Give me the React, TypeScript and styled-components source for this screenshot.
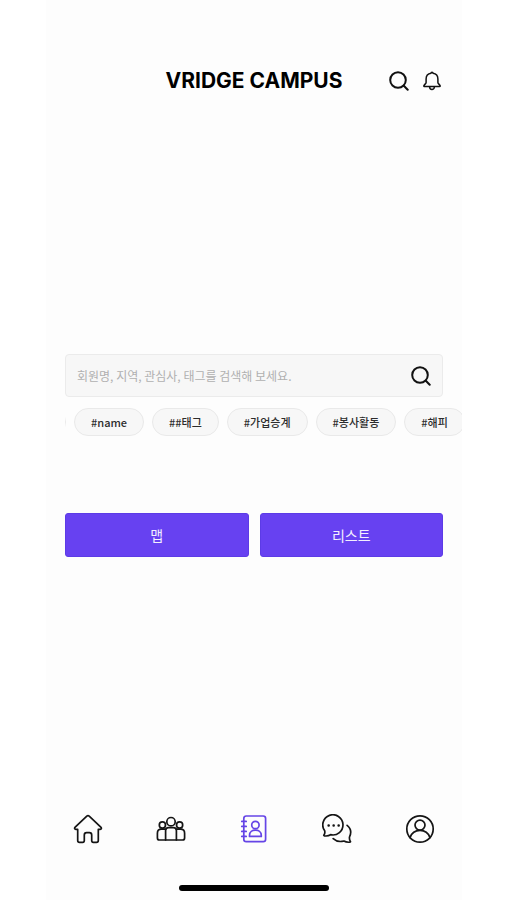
import React from "react";
import styled, { createGlobalStyle } from "styled-components";

const GlobalStyle = createGlobalStyle`
  *, *::before, *::after { box-sizing: border-box; }
  body {
    margin: 0;
    background: #ffffff;
    color: #111111;
    font-family: "Noto Sans CJK KR", "Noto Sans", sans-serif;
  }
  button, input { font-family: inherit; }
`;

const Page = styled.div`
  min-height: 100vh;
  display: flex;
  padding: 0 45px 0 46px;
`;

const Screen = styled.div`
  flex: 1;
  min-width: 0;
  display: flex;
  flex-direction: column;
  background: #fdfdfd;
`;

const Header = styled.header`
  display: grid;
  grid-template-columns: 1fr auto 1fr;
  align-items: center;
  height: 42px;
  margin-top: 60px;
  padding: 0 20px;
`;

const Brand = styled.h1`
  grid-column: 2;
  margin: 0;
  color: #000000;
  font-family: Inter, "Liberation Sans", sans-serif;
  font-size: 21px;
  font-weight: 700;
  line-height: 28px;
  white-space: nowrap;
`;

const HeaderActions = styled.div`
  display: flex;
  justify-content: flex-end;
  gap: 13px;
`;

const IconButton = styled.button`
  display: flex;
  padding: 0;
  border: 0;
  background: none;
  color: #111111;
  cursor: pointer;
`;

const Main = styled.main`
  flex: 1;
  display: flex;
  flex-direction: column;
  padding: 252px 0 40px 19px;
`;

const SearchForm = styled.form`
  display: flex;
  align-items: center;
  height: 43px;
  margin-right: 19px;
  padding: 0 11px;
  border: 1px solid #ebebeb;
  border-radius: 4px;
  background: #f7f7f7;
`;

const SearchInput = styled.input`
  flex: 1;
  min-width: 0;
  padding: 0;
  border: 0;
  outline: 0;
  background: transparent;
  color: #333333;
  font-size: 12px;
  line-height: 20px;
  &::placeholder { color: #b0b0b0; opacity: 1; }
`;

const TagList = styled.div`
  display: flex;
  gap: 8px;
  margin-top: 11px;
  overflow: hidden;
`;

const Tag = styled.button`
  flex: none;
  height: 28px;
  padding: 0 16px;
  border: 1px solid #e9e9e9;
  border-radius: 14px;
  background: #f7f7f7;
  color: #2c2c2c;
  font-size: 11px;
  font-weight: 500;
  line-height: 20px;
  white-space: nowrap;
  cursor: pointer;
`;

const ScrolledTag = styled.span`
  flex: none;
  width: 28px;
  height: 28px;
  margin-left: -27px;
  border: 1px solid #e9e9e9;
  border-radius: 14px;
`;

const ViewButtons = styled.div`
  display: grid;
  grid-template-columns: 1fr 1fr;
  gap: 11px;
  margin: 77px 19px 0 0;
`;

const ViewButton = styled.button`
  height: 44px;
  padding: 0;
  border: 1px solid #5c3be6;
  border-radius: 3px;
  background: #6741f1;
  color: #f3efff;
  font-size: 14px;
  line-height: 20px;
  cursor: pointer;
`;

const TabBar = styled.nav`
  display: grid;
  grid-template-columns: repeat(5, 1fr);
  height: 58px;
`;

const Tab = styled.a<{ $active?: boolean }>`
  display: flex;
  align-items: center;
  justify-content: center;
  color: ${(p) => (p.$active ? "#6545e6" : "#151515")};
`;

const HomeIndicator = styled.div`
  width: 36%;
  height: 6px;
  margin: 27px auto 9px;
  border-radius: 3px;
  background: #000000;
`;

const Icon = styled.svg`
  display: block;
  fill: none;
  stroke: currentColor;
  stroke-linecap: round;
  stroke-linejoin: round;
`;

const SearchIcon = ({ size }: { size: number }) => (
  <Icon width={size} height={size} viewBox="0 0 20 20" strokeWidth="2" aria-hidden="true">
    <circle cx="9" cy="9" r="7.8" />
    <path d="m14.8 14.8 3.9 3.9" />
  </Icon>
);

const BellIcon = () => (
  <Icon width="20" height="20" viewBox="0 0 20 20" strokeWidth="1.5" aria-hidden="true">
    <path d="M9 2.2C9 .9 11 .9 11 2.2c3 .5 4.9 2.7 4.9 5.7v3.5c0 1.5 2.3 2.4 2.3 3.6 0 .4-.3.6-.7.6h-15c-.4 0-.7-.2-.7-.6 0-1.2 2.3-2.1 2.3-3.6V7.9c0-3 1.9-5.2 4.9-5.7Z" />
    <path d="M7.6 15.8c0 3.5 4.8 3.5 4.8 0" />
  </Icon>
);

const HomeIcon = () => (
  <Icon width="30" height="30" viewBox="0 0 30 30" strokeWidth="1.7" aria-hidden="true">
    <path d="M13.8 2.1Q15 1 16.2 2.1l11.6 11.1c1.1 1.1.5 2.2-1 2.2h-1.5v11.1c0 1.2-.6 1.8-1.8 1.8h-3.2c-1.1 0-1.6-.6-1.6-1.7v-5.5c0-1.5-.9-2.4-2.3-2.4h-2.8c-1.4 0-2.3.9-2.3 2.4v5.5c0 1.1-.5 1.7-1.6 1.7H6.5c-1.2 0-1.8-.6-1.8-1.8V15.4H3.2c-1.5 0-2.1-1.1-1-2.2Z" />
  </Icon>
);

const GroupIcon = () => (
  <Icon width="30" height="30" viewBox="0 0 30 30" strokeWidth="1.7" aria-hidden="true">
    <circle cx="15" cy="7.7" r="4.2" />
    <circle cx="6.4" cy="11" r="3.1" />
    <circle cx="23.6" cy="11" r="3.1" />
    <path d="M9.6 26V16.6q0-3 3-3h4.8q3 0 3 3V26" />
    <path d="M9.6 15.2H5.4q-4 0-4 4V24q0 2 2 2h23.2q2 0 2-2v-4.8q0-4-4-4h-4.2" />
  </Icon>
);

const ContactsIcon = () => (
  <Icon width="30" height="30" viewBox="0 0 30 30" strokeWidth="1.7" aria-hidden="true">
    <rect x="4.8" y="2" width="21.8" height="25.6" rx="2.4" />
    <path d="M2.8 7.4h4.4M2.8 12.4h4.4M2.8 17.4h4.4M2.8 22.4h4.4" />
    <circle cx="16.4" cy="11" r="3.7" />
    <path d="M10.5 22.4v-1c0-7 11.8-7 11.8 0v1Z" />
  </Icon>
);

const ChatIcon = () => (
  <Icon width="30" height="30" viewBox="0 0 30 30" strokeWidth="1.7" aria-hidden="true">
    <path d="M2.7 16.8A10.1 10.1 0 1 1 8.6 20.7q-2.5 1.7-6.2 1.2c-.6-.1-.8-.6-.4-1 .9-1.1 1-2.6.7-4.1Z" />
    <path d="M25.1 11.3c3.8 3 4.3 7.6 2.4 11.7-.2 1.5 0 3 .8 4.2.4.5.1 1-.5 1-2.2.2-4.1-.1-5.9-1.2-4.1 1.1-7.9.3-10.7-2.3" />
    <path d="M6.6 11.6h.1M11.6 11.6h.1M16.6 11.6h.1" strokeWidth="2.5" />
  </Icon>
);

const ProfileIcon = () => (
  <Icon width="30" height="30" viewBox="0 0 30 30" strokeWidth="1.7" aria-hidden="true">
    <circle cx="15" cy="15" r="13.2" />
    <circle cx="15" cy="11.1" r="5" />
    <path d="M5 23.6C8.4 14 21.6 14 25 23.6" />
  </Icon>
);

const tags = ["#name", "##태그", "#가업승계", "#봉사활동", "#해피"];

const tabs = [
  { label: "홈", href: "#home", icon: <HomeIcon /> },
  { label: "모임", href: "#groups", icon: <GroupIcon /> },
  { label: "회원 찾기", href: "#members", icon: <ContactsIcon />, active: true },
  { label: "채팅", href: "#chat", icon: <ChatIcon /> },
  { label: "프로필", href: "#profile", icon: <ProfileIcon /> },
];

export default function App() {
  return (
    <>
      <GlobalStyle />
      <Page>
        <Screen>
          <Header>
            <Brand>VRIDGE CAMPUS</Brand>
            <HeaderActions>
              <IconButton type="button" aria-label="검색">
                <SearchIcon size={20} />
              </IconButton>
              <IconButton type="button" aria-label="알림">
                <BellIcon />
              </IconButton>
            </HeaderActions>
          </Header>
          <Main>
            <SearchForm role="search" onSubmit={(e) => e.preventDefault()}>
              <SearchInput
                type="text"
                aria-label="회원 검색"
                placeholder="회원명, 지역, 관심사, 태그를 검색해 보세요."
              />
              <IconButton type="submit" aria-label="회원 검색하기">
                <SearchIcon size={20} />
              </IconButton>
            </SearchForm>
            <TagList>
              <ScrolledTag aria-hidden="true" />
              {tags.map((tag) => (
                <Tag key={tag} type="button">
                  {tag}
                </Tag>
              ))}
            </TagList>
            <ViewButtons>
              <ViewButton type="button">맵</ViewButton>
              <ViewButton type="button">리스트</ViewButton>
            </ViewButtons>
          </Main>
          <TabBar>
            {tabs.map((tab) => (
              <Tab
                key={tab.href}
                href={tab.href}
                aria-label={tab.label}
                aria-current={tab.active ? "page" : undefined}
                $active={tab.active}
              >
                {tab.icon}
              </Tab>
            ))}
          </TabBar>
          <HomeIndicator />
        </Screen>
      </Page>
    </>
  );
}
